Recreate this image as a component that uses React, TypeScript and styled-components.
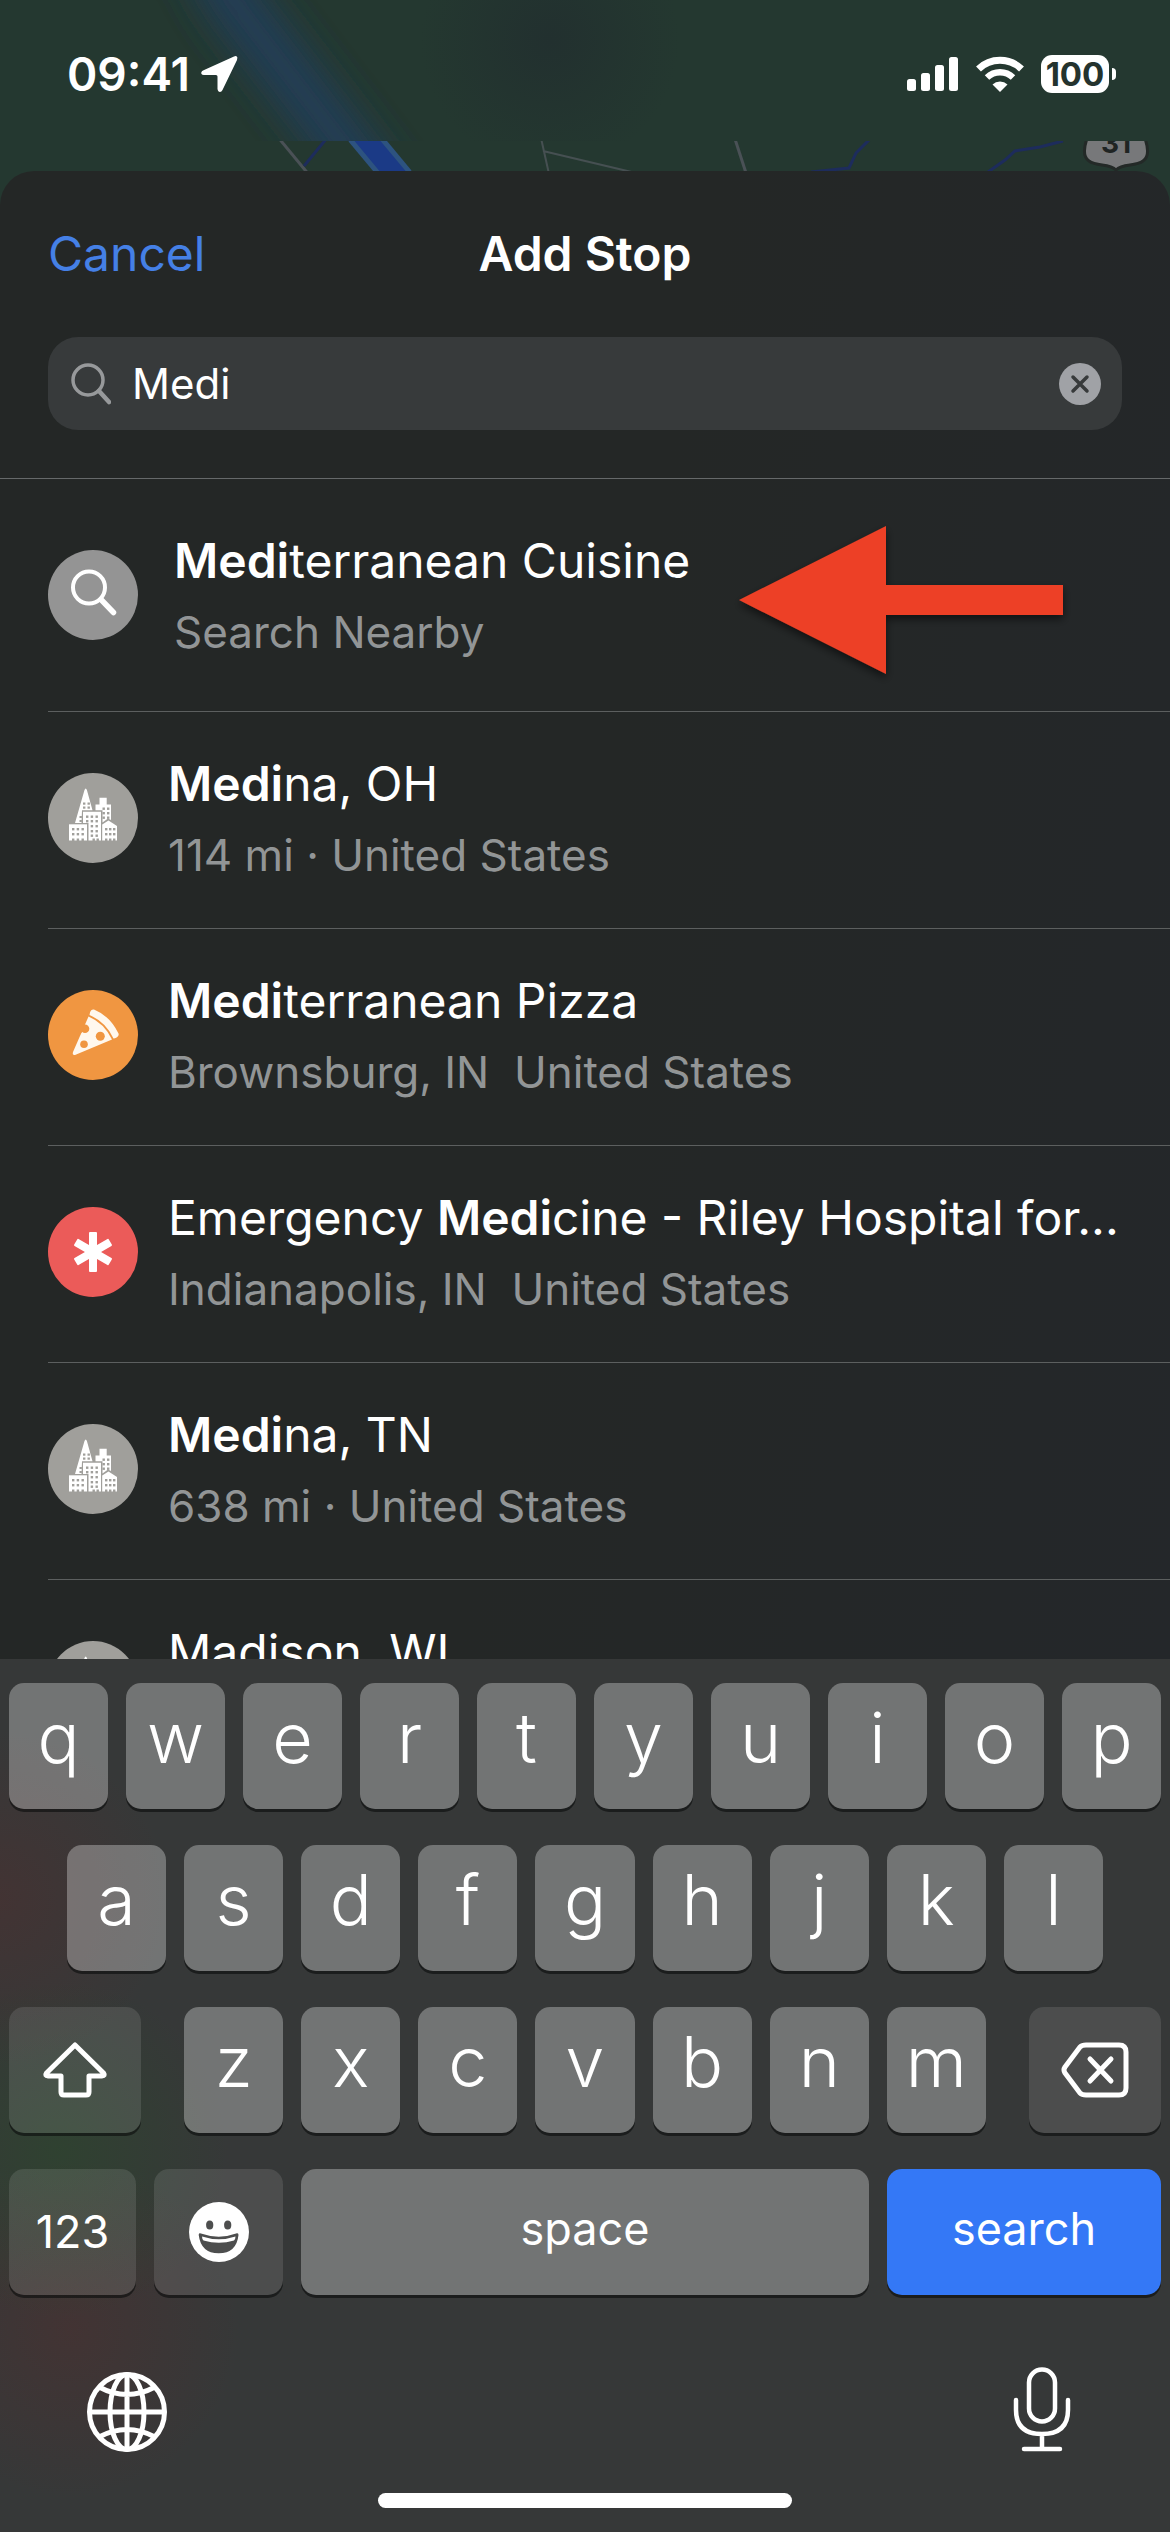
import React from "react";
import styled, { createGlobalStyle } from "styled-components";

const GlobalStyle = createGlobalStyle`
  * { box-sizing: border-box; }
  html, body { margin: 0; padding: 0; background: #242727; }
  button, input { font: inherit; color: inherit; border: 0; padding: 0; margin: 0; background: none; }
  button { cursor: pointer; }
`;

const Screen = styled.div`
  position: relative;
  display: flex;
  flex-direction: column;
  height: 100vh;
  overflow: hidden;
  background: #243730;
  color: #fff;
  font-family: Inter, "Liberation Sans", sans-serif;
`;

const MapBackdrop = styled.svg`
  position: absolute;
  top: 0;
  left: 0;
  width: 100%;
  height: 240px;
`;

const StatusBar = styled.header`
  position: relative;
  display: flex;
  justify-content: space-between;
  align-items: center;
  padding: 44px 54px 67px 67px;
`;

const StatusGroup = styled.div<{ $gap: number }>`
  display: flex;
  align-items: center;
  gap: ${(p) => p.$gap}px;
`;

const Clock = styled.time`
  font-size: 46px;
  line-height: 60px;
  font-weight: 600;
`;

const Battery = styled.div`
  display: flex;
  align-items: center;
  gap: 3px;
`;

const BatteryLevel = styled.span`
  width: 68px;
  border-radius: 11px;
  background: #fff;
  color: #24332e;
  font-size: 33px;
  line-height: 38px;
  font-weight: 700;
  text-align: center;
`;

const BatteryTip = styled.span`
  width: 4px;
  height: 12px;
  border-radius: 0 6px 6px 0;
  background: #fff;
`;

const Sheet = styled.main`
  position: relative;
  flex: 1;
  min-height: 0;
  display: flex;
  flex-direction: column;
  border-radius: 34px 34px 0 0;
  background: linear-gradient(100deg, #242726 50%, #24272a 100%);
`;

const SheetHeader = styled.div`
  display: grid;
  grid-template-columns: 1fr auto 1fr;
  align-items: center;
  padding: 53px 48px 53px;
  font-size: 48px;
  line-height: 60px;
`;

const CancelButton = styled.button`
  justify-self: start;
  color: #4580e6;
`;

const SheetTitle = styled.h1`
  margin: 0;
  font-size: inherit;
  font-weight: 600;
`;

const SearchArea = styled.form`
  padding: 0 48px 48px;
  border-bottom: 1px solid #66696a;
`;

const SearchField = styled.label`
  display: flex;
  align-items: center;
  gap: 21px;
  height: 93px;
  padding: 0 21px 0 23px;
  border-radius: 30px;
  background: #373a3b;
`;

const SearchInput = styled.input`
  flex: 1;
  min-width: 0;
  outline: none;
  font-size: 42px;
  line-height: 54px;
`;

const IconButton = styled.button`
  display: flex;
`;

const Results = styled.ul`
  flex: 1;
  min-height: 0;
  overflow: hidden;
  margin: 0;
  padding: 0 0 0 48px;
  list-style: none;
`;

const ResultItem = styled.li`
  position: relative;
  border-bottom: 1px solid #5c5f5f;
`;

const ResultButton = styled.button<{ $featured?: boolean }>`
  display: flex;
  align-items: center;
  gap: ${(p) => (p.$featured ? 36 : 30)}px;
  width: 100%;
  padding: ${(p) => (p.$featured ? "52px 48px 52px 0" : "42px 48px 46px 0")};
  text-align: left;
`;

const Badge = styled.span<{ $color: string }>`
  display: flex;
  flex: none;
  width: 90px;
  height: 90px;
  border-radius: 50%;
  background: ${(p) => p.$color};
`;

const ResultText = styled.span`
  display: flex;
  flex-direction: column;
  gap: 14px;
  min-width: 0;
`;

const ResultTitle = styled.span`
  font-size: 48px;
  line-height: 60px;
  white-space: nowrap;

  strong { font-weight: 600; }
`;

const ResultSubtitle = styled.span`
  min-height: 54px;
  font-size: 44px;
  line-height: 54px;
  white-space: pre;
  color: #929596;
`;

const Pointer = styled.svg`
  position: absolute;
  top: 36px;
  right: 96px;
  width: 350px;
  height: 170px;
  pointer-events: none;
`;

const Keyboard = styled.section`
  position: relative;
  padding: 24px 9px;
  background:
    radial-gradient(circle at 0 240px, rgba(110, 35, 35, 0.22), transparent 170px),
    radial-gradient(circle at 60px 490px, rgba(30, 90, 30, 0.28), transparent 170px),
    radial-gradient(circle at 70px 670px, rgba(110, 35, 35, 0.22), transparent 170px),
    #363838;
`;

const KeyRows = styled.div`
  display: flex;
  flex-direction: column;
  gap: 36px;
`;

const KeyRow = styled.div<{ $inset?: number }>`
  display: flex;
  gap: 18px;
  padding: 0 ${(p) => p.$inset ?? 0}px;
`;

const LetterGroup = styled.div`
  display: flex;
  flex: 801;
  gap: 18px;
  margin: 0 25px;
`;

const Key = styled.button<{ $grow?: number; $tone?: "light" | "dark" | "blue"; $label?: boolean }>`
  display: flex;
  align-items: center;
  justify-content: center;
  flex: ${(p) => p.$grow ?? 99} 1 0;
  min-width: 0;
  height: 126px;
  padding-bottom: ${(p) => (p.$label ? 6 : 16)}px;
  border-radius: 15px;
  background: ${(p) =>
    p.$tone === "blue" ? "#3478f6" : p.$tone === "dark" ? "rgba(255,255,255,0.11)" : "rgba(255,255,255,0.3)"};
  box-shadow: 0 3px 0 rgba(10, 12, 12, 0.6);
  font-size: ${(p) => (p.$label ? 45 : 70)}px;
  line-height: ${(p) => (p.$label ? 60 : 84)}px;
  font-weight: ${(p) => (p.$label ? 400 : 350)};
`;

const SymbolKey = styled(Key)`
  padding-bottom: 0;
`;

const KeyboardFooter = styled.div`
  display: flex;
  justify-content: space-between;
  align-items: center;
  padding: 72px 89px 36px 76px;
`;

const HomeBar = styled.div`
  width: 36%;
  height: 15px;
  margin: 0 auto;
  border-radius: 8px;
  background: #fff;
`;

const MapArt = () => (
  <MapBackdrop viewBox="0 0 1170 240" preserveAspectRatio="xMidYMin slice" aria-hidden="true">
    <defs>
      <filter id="haze" x="-50%" y="-50%" width="200%" height="200%">
        <feGaussianBlur stdDeviation="18" />
      </filter>
      <clipPath id="hazeArea"><rect width="1170" height="141" /></clipPath>
      <clipPath id="clearArea"><rect y="141" width="1170" height="99" /></clipPath>
      <radialGradient id="shade">
        <stop offset="0" stopColor="#22302f" />
        <stop offset="1" stopColor="#22302f" stopOpacity="0" />
      </radialGradient>
    </defs>
    <rect width="1170" height="240" fill="#243830" />
    <g clipPath="url(#hazeArea)">
      <circle cx="550" cy="40" r="130" fill="url(#shade)" />
      <g filter="url(#haze)">
        <path d="M200 -60 L232 0 L355 160 L400 220" stroke="#203d55" strokeWidth="56" fill="none" />
      </g>
    </g>
    <g clipPath="url(#clearArea)" fill="none">
      <path d="M360 132 L400 180" stroke="#2d5380" strokeWidth="30" />
      <path d="M360 132 L400 180" stroke="#1b3a86" strokeWidth="20" />
      <path d="M277 136 L310 176" stroke="#4a5156" strokeWidth="3" />
      <path d="M327 138 L304 166" stroke="#1d2c5c" strokeWidth="3" />
      <path d="M541 138 L549 174 M543 151 L640 174" stroke="#465052" strokeWidth="2" />
      <path d="M734 136 L747 176" stroke="#4a5156" strokeWidth="3" />
      <path d="M870 139 L856 153 L849 168 L811 172" stroke="#1d2c5c" strokeWidth="3" />
      <path d="M1063 141 L1040 147 L1015 151 L1005 160 L988 172" stroke="#1d2c5c" strokeWidth="3" />
      <path
        d="M1088 136 C1084 146 1082 156 1089 161 C1097 167 1109 163 1116 170 C1123 163 1135 167 1143 161 C1150 156 1148 146 1144 136 Z"
        fill="#77787a" stroke="#232927" strokeWidth="3"
      />
      <text x="1116" y="153" fill="#1f2423" fontSize="28" fontWeight="700" textAnchor="middle">31</text>
    </g>
  </MapBackdrop>
);

const LocationIcon = () => (
  <svg width="40" height="40" viewBox="0 0 40 40" aria-hidden="true">
    <path d="M34 2.500 L3 16.500 Q0.500 18 1.500 20 Q2 21 4 21 L16 21 Q17.500 21 17.500 22.500 L17.500 35 Q18 38 20 38 Q21.500 38 22.500 36 L37 6 Q38 3 36.500 2.300 Q35.500 1.800 34 2.500 Z" fill="#fff" />
  </svg>
);

const SignalIcon = () => (
  <svg width="52" height="36" viewBox="0 0 52 36" fill="#fff" aria-hidden="true">
    <rect x="0" y="23" width="9" height="12" rx="2.500" />
    <rect x="14" y="17" width="9" height="18" rx="2.500" />
    <rect x="28" y="9" width="9" height="26" rx="2.500" />
    <rect x="42" y="1" width="9" height="34" rx="2.500" />
  </svg>
);

const WifiIcon = () => (
  <svg width="50" height="38" viewBox="0 0 50 38" aria-hidden="true">
    <path d="M3.500 14 A31 31 0 0 1 46.500 14" fill="none" stroke="#fff" strokeWidth="7" />
    <path d="M12 22.500 A19 19 0 0 1 38 22.500" fill="none" stroke="#fff" strokeWidth="6.500" />
    <path d="M25 37 L17.500 29.500 A11 11 0 0 1 32.500 29.500 Z" fill="#fff" />
  </svg>
);

const FieldLensIcon = () => (
  <svg width="40" height="42" viewBox="0 0 40 42" fill="none" stroke="#97999b" aria-hidden="true">
    <circle cx="17" cy="17" r="15" strokeWidth="3.500" />
    <path d="M28 28 L38 39" strokeWidth="4.500" strokeLinecap="round" />
  </svg>
);

const ClearIcon = () => (
  <svg width="42" height="42" viewBox="0 0 42 42" aria-hidden="true">
    <circle cx="21" cy="21" r="21" fill="#a0a2a6" />
    <path d="M14 14 L28 28 M28 14 L14 28" stroke="#373a3b" strokeWidth="3.500" strokeLinecap="round" />
  </svg>
);

const LensGlyph = () => (
  <svg viewBox="0 0 90 90" fill="none" stroke="#fff" aria-hidden="true">
    <circle cx="41" cy="37.500" r="16" strokeWidth="4" />
    <path d="M53 49.500 L65.500 62.500" strokeWidth="5.500" strokeLinecap="round" />
  </svg>
);

const windows = (xs: number[], ys: number[], h = 2.4) =>
  xs.flatMap((x) => ys.map((y) => <rect key={`${x}-${y}`} x={x} y={y} width="2.400" height={h} />));

const CityGlyph = () => (
  <svg viewBox="0 0 90 90" aria-hidden="true">
    <g fill="#fff">
      <path d="M36.500 17 Q37.700 14 38.900 17 L44.500 37.200 L34 37.200 L33.500 50 L27 50 Z" />
      <path d="M47.500 31.500 H51.500 V24.700 H58.700 V31.500 H63 V47 L60 45.500 L54.500 49.500 V37.200 H47.500 Z" />
      <path d="M35 38.700 H53 V67.500 H40.500 V50 H35 Z" />
      <path d="M21 51.300 H39 V67.500 H21 Z" />
      <path d="M54.200 51.500 L60.500 47.500 L69 53 V67.500 H54.200 Z" />
    </g>
    <g fill="#a09f9b">
      {windows([35, 39.5], [29.500, 33.500], 2.2)}
      {windows([31.5], [43, 47], 2)}
      {windows([54.5, 59], [34.5, 39, 43.5])}
      {windows([38, 42.7, 47.5], [42.5, 47])}
      {windows([42.7, 47.5], [52, 57, 61.5])}
      {windows([24, 28.7, 33.5], [55, 60])}
      {windows([57, 61, 65], [55, 60])}
      {windows([24, 28.7, 33.5, 44.5, 48.5, 57, 61, 65], [65.500], 3)}
    </g>
  </svg>
);

const PizzaGlyph = () => (
  <svg viewBox="0 0 90 90" aria-hidden="true">
    <g fill="#fff8ee">
      <path d="M42 22.500 Q43 19 46 19.500 Q62 26 70.500 43.500 Q71.500 46.500 67 48.300 L65.500 48.500 Q58 32 41.500 25 Z" />
      <path d="M40.500 26.500 Q56 33 64 49.500 L27 65 Q24 65.500 25 62 Z" />
    </g>
    <g fill="#f09641">
      <circle cx="37" cy="38.700" r="4.300" />
      <path d="M30 36 L36 35 L34 42 L31 46 Z" />
      <circle cx="52.300" cy="46.300" r="4.500" />
      <circle cx="36" cy="54.300" r="3.800" />
    </g>
  </svg>
);

const MedicalGlyph = () => (
  <svg viewBox="0 0 90 90" fill="#fff" aria-hidden="true">
    {[0, 60, 120].map((angle) => (
      <rect key={angle} x="41" y="25" width="8" height="40" rx="1" transform={`rotate(${angle} 45 45)`} />
    ))}
  </svg>
);

const ShiftIcon = () => (
  <svg width="66" height="58" viewBox="0 0 66 58" fill="none" stroke="#fff" strokeWidth="5" strokeLinejoin="round" aria-hidden="true">
    <path d="M33 4 L61.500 32 Q63.500 35 60 35 H47 V51 Q47 54 44 54 H22 Q19 54 19 51 V35 H6 Q2.500 35 4.500 32 Z" />
  </svg>
);

const DeleteIcon = () => (
  <svg width="68" height="58" viewBox="0 0 68 58" fill="none" stroke="#fff" strokeWidth="5" strokeLinejoin="round" strokeLinecap="round" aria-hidden="true">
    <path d="M25 4 H58 Q65 4 65 11 V47 Q65 54 58 54 H25 Q21 54 19 52 L4 32 Q2 29 4 26 L19 6 Q21 4 25 4 Z" />
    <path d="M29 18 L50 40 M50 18 L29 40" />
  </svg>
);

const EmojiIcon = () => (
  <svg width="60" height="60" viewBox="0 0 60 60" aria-hidden="true">
    <circle cx="30" cy="30" r="30" fill="#fff" />
    <g fill="#4d4e4e">
      <ellipse cx="20.700" cy="23" rx="3.600" ry="4.500" />
      <ellipse cx="38.700" cy="23" rx="3.600" ry="4.500" />
      <path d="M11 31.300 Q30 38 48 31.300 Q49.500 31 49.500 33 Q47.500 51.300 29.700 51.300 Q12 51.300 9.700 33 Q9.700 31 11 31.300 Z" />
    </g>
    <path d="M13 34.500 Q30 40 46.500 34.500 Q46.500 37 45 38.500 Q30 43 14.500 38.500 Q13 37 13 34.500 Z" fill="#fff" />
  </svg>
);

const GlobeIcon = () => (
  <svg width="84" height="90" viewBox="0 0 84 90" fill="none" stroke="#fff" strokeWidth="5" aria-hidden="true">
    <circle cx="42" cy="45" r="37.500" />
    <ellipse cx="42" cy="45" rx="17" ry="37.500" />
    <path d="M42 7 V83 M4 45 H80 M14 20 Q42 35 70 20 M14 70 Q42 55 70 70" />
  </svg>
);

const MicIcon = () => (
  <svg width="60" height="90" viewBox="0 0 60 90" fill="none" stroke="#fff" strokeWidth="4.500" strokeLinecap="round" aria-hidden="true">
    <rect x="17" y="2.500" width="26" height="52" rx="13" />
    <path d="M4 33 V43 Q4 67 30 67 Q56 67 56 43 V33 M30 67 V82 M12 82 H48" />
  </svg>
);

type Result = {
  before?: string;
  match?: string;
  after: string;
  subtitle?: string;
  color: string;
  glyph: React.ReactNode;
  featured?: boolean;
};

const results: Result[] = [
  { match: "Medi", after: "terranean Cuisine", subtitle: "Search Nearby", color: "#949494", glyph: <LensGlyph />, featured: true },
  { match: "Medi", after: "na, OH", subtitle: "114 mi · United States", color: "#a09f9b", glyph: <CityGlyph /> },
  { match: "Medi", after: "terranean Pizza", subtitle: "Brownsburg, IN  United States", color: "#f09641", glyph: <PizzaGlyph /> },
  { before: "Emergency ", match: "Medi", after: "cine - Riley Hospital for...", subtitle: "Indianapolis, IN  United States", color: "#eb5b59", glyph: <MedicalGlyph /> },
  { match: "Medi", after: "na, TN", subtitle: "638 mi · United States", color: "#a09f9b", glyph: <CityGlyph /> },
  { after: "Madison, WI", color: "#a09f9b", glyph: <CityGlyph /> },
];

const letters = (row: string) => row.split("").map((letter) => <Key type="button" key={letter}>{letter}</Key>);

export default function App() {
  const [query, setQuery] = React.useState("Medi");

  return (
    <Screen>
      <GlobalStyle />
      <MapArt />
      <StatusBar>
        <StatusGroup $gap={10}>
          <Clock>09:41</Clock>
          <LocationIcon />
        </StatusGroup>
        <StatusGroup $gap={16}>
          <SignalIcon />
          <WifiIcon />
          <Battery>
            <BatteryLevel>100</BatteryLevel>
            <BatteryTip />
          </Battery>
        </StatusGroup>
      </StatusBar>

      <Sheet>
        <SheetHeader>
          <CancelButton type="button">Cancel</CancelButton>
          <SheetTitle>Add Stop</SheetTitle>
        </SheetHeader>
        <SearchArea onSubmit={(e) => e.preventDefault()}>
          <SearchField>
            <FieldLensIcon />
            <SearchInput aria-label="Search" value={query} onChange={(e) => setQuery(e.target.value)} />
            <IconButton type="button" aria-label="Clear text" onClick={() => setQuery("")}>
              <ClearIcon />
            </IconButton>
          </SearchField>
        </SearchArea>
        <Results>
          {results.map((r) => (
            <ResultItem key={r.after}>
              <ResultButton type="button" $featured={r.featured}>
                <Badge $color={r.color}>{r.glyph}</Badge>
                <ResultText>
                  <ResultTitle>
                    {r.before}
                    {r.match && <strong>{r.match}</strong>}
                    {r.after}
                  </ResultTitle>
                  <ResultSubtitle>{r.subtitle}</ResultSubtitle>
                </ResultText>
              </ResultButton>
              {r.featured && (
                <Pointer viewBox="0 0 350 170" aria-hidden="true">
                  <defs>
                    <filter id="pointerShadow" x="-10%" y="-10%" width="120%" height="130%">
                      <feDropShadow dx="0" dy="4" stdDeviation="4" floodColor="#000" floodOpacity="0.55" />
                    </filter>
                  </defs>
                  <path d="M15 85 L162 11 V70 H339 V100 H162 V159 Z" fill="#ed4026" filter="url(#pointerShadow)" />
                </Pointer>
              )}
            </ResultItem>
          ))}
        </Results>
      </Sheet>

      <Keyboard aria-label="Keyboard">
        <KeyRows>
          <KeyRow>{letters("qwertyuiop")}</KeyRow>
          <KeyRow $inset={58}>{letters("asdfghjkl")}</KeyRow>
          <KeyRow>
            <SymbolKey type="button" $tone="dark" $grow={132} aria-label="Shift"><ShiftIcon /></SymbolKey>
            <LetterGroup>{letters("zxcvbnm")}</LetterGroup>
            <SymbolKey type="button" $tone="dark" $grow={132} aria-label="Delete"><DeleteIcon /></SymbolKey>
          </KeyRow>
          <KeyRow>
            <SymbolKey type="button" $tone="dark" $label $grow={127}>123</SymbolKey>
            <SymbolKey type="button" $tone="dark" $grow={129} aria-label="Emoji"><EmojiIcon /></SymbolKey>
            <Key type="button" $label $grow={568}>space</Key>
            <Key type="button" $tone="blue" $label $grow={274}>search</Key>
          </KeyRow>
        </KeyRows>
        <KeyboardFooter>
          <IconButton type="button" aria-label="Next keyboard"><GlobeIcon /></IconButton>
          <IconButton type="button" aria-label="Dictate"><MicIcon /></IconButton>
        </KeyboardFooter>
        <HomeBar />
      </Keyboard>
    </Screen>
  );
}
